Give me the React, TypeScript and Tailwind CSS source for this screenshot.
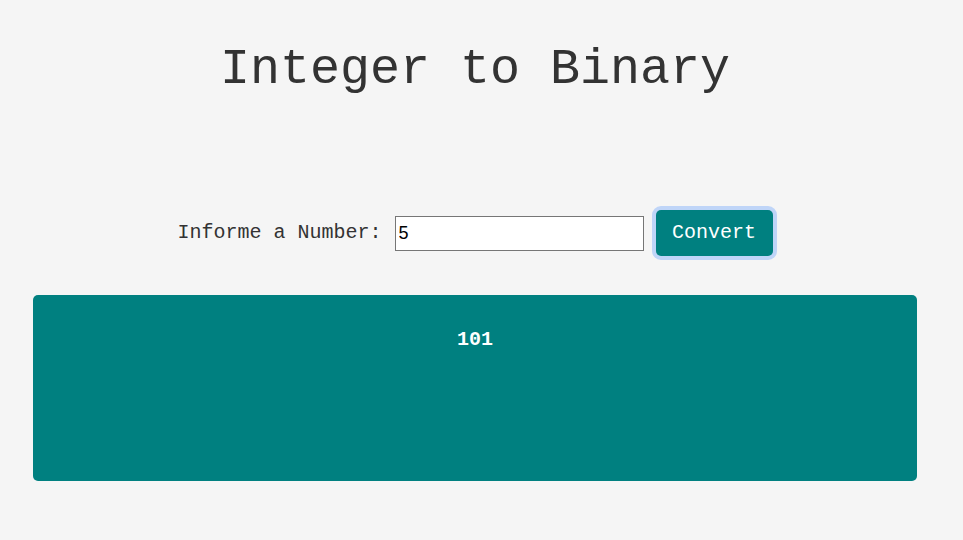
import { useState } from "react";

export default function App() {
  const [value, setValue] = useState<string>("5");
  const [result, setResult] = useState<string>("101");

  const convert = () => {
    const n = parseInt(value, 10);
    setResult(Number.isNaN(n) ? "" : n.toString(2));
  };

  return (
    <div className="min-h-[540px] w-full bg-[#f5f5f5] font-['Liberation_Mono',_'Courier_New',_monospace]">
      <div className="w-[950px] pt-[32px]">
        <h1 className="text-center text-[50px] font-normal leading-normal text-[#333]">
          Integer to Binary
        </h1>

        <div className="mt-[103px] flex items-center justify-center gap-3">
          <label htmlFor="num" className="text-[20px] text-[#333] mr-px">
            Informe a Number:
          </label>
          <input
            id="num"
            value={value}
            onChange={(e) => setValue(e.target.value)}
            className="h-[35px] w-[249px] border border-[#767676] bg-white pl-[3px] font-['Liberation_Sans',_Arial,_sans-serif] text-[18px] text-black outline-none"
          />
          <button
            onClick={convert}
            className="h-[46px] w-[117px] rounded-[5px] bg-[#008080] text-[20px] text-white shadow-[0_0_0_4px_#bfd5f8]"
          >
            Convert
          </button>
        </div>

        {/* result panel */}
        <div className="mx-[33px] mt-[39px] h-[186px] rounded-[5px] bg-[#008080] pt-[30px] text-center">
          <span className="text-[20px] font-bold text-white">{result}</span>
        </div>
      </div>
    </div>
  );
}
